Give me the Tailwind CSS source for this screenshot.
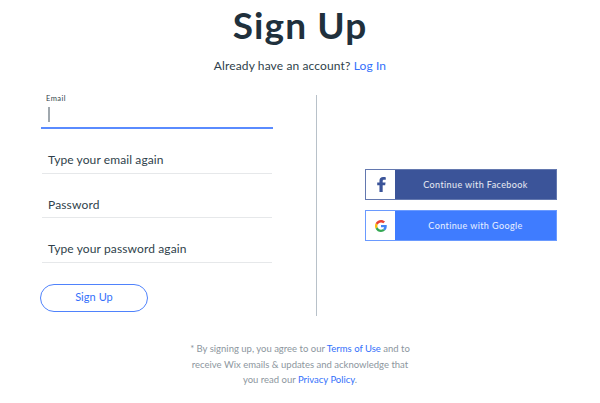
<!DOCTYPE html>
<html lang="en">
<head>
    <meta charset="UTF-8">
    <meta name="viewport" content="width=device-width, initial-scale=1.0">
    <title>Sign Up</title>
    <script src="https://cdn.jsdelivr.net/npm/@tailwindcss/browser@4"></script>
</head>
<body class="h-[403px] overflow-hidden bg-white font-['Lato',sans-serif] text-[#20303c]">

    <header class="flex flex-col items-center pt-[3px]">
        <h1 class="h-[44px] text-[37px] leading-[44px] font-bold tracking-[1.1px] whitespace-nowrap">Sign Up</h1>
        <p class="mt-[10px] text-[12px] leading-[18px] tracking-[0.12px] whitespace-nowrap text-[#2f3f4b]">Already have an account? <a href="#" class="text-[#3370fb]">Log In</a></p>
    </header>

    <main class="flex h-[221px] mt-[20px] pl-[40px]">
        <form class="w-[276px] shrink-0 text-[#2f3f4b]">
            <div class="ml-px h-[34px] w-[232px] border-b-2 border-[#5a8bff]">
                <label class="block pl-[5px] text-[7.5px] leading-[8px] tracking-[0.45px]">Email</label>
                <div class="mt-[4px] ml-[7px] h-[15px] w-[2px] bg-[#a0a8ae]"></div>
            </div>
            <div class="ml-[2px] h-[45px] w-[230px] border-b border-[#e6e8ea] pt-[22px] pl-[6px] text-[12px] leading-[18px] tracking-[0.1px]">Type your email again</div>
            <div class="ml-[2px] h-[44px] w-[230px] border-b border-[#e6e8ea] pt-[22px] pl-[6px] text-[12px] leading-[18px] tracking-[0.15px]">Password</div>
            <div class="ml-[2px] h-[45px] w-[230px] border-b border-[#e6e8ea] pt-[22px] pl-[6px] text-[12px] leading-[18px] tracking-[0.12px]">Type your password again</div>
            <button type="button" class="mt-[21px] block h-[28px] w-[108px] rounded-full border border-[#4f82fc] pb-[2px] text-[11px] leading-[24px] tracking-[0.05px] text-[#3370fb]">Sign Up</button>
        </form>

        <div class="w-px bg-[#b8c1c9]"></div>

        <div class="ml-[48px] flex w-[192px] flex-col gap-[10px] pt-[74px]">
            <button type="button" class="flex h-[31px] w-full border border-[#6378af] bg-[#3b5499] text-white">
                <span class="flex h-full w-[29px] items-center justify-center bg-white pl-[2px]">
                    <svg class="h-[15px] w-[9px]" viewBox="0 0 8 14" fill="#3b5499">
                        <path d="M2.1 14V7.800H0V5.200h2.100V3.500C2.100 1.200 3.500 0 5.500 0 6.600 0 7.600.1 8 .2v2.300H6.500c-1.100 0-1.400.5-1.400 1.300v1.400h2.700l-.4 2.600H5.100V14z"/>
                    </svg>
                </span>
                <span class="flex-1 text-center text-[9px] leading-[30px] tracking-[0.4px] text-white/90">Continue with Facebook</span>
            </button>
            <button type="button" class="flex h-[31px] w-full border border-[#6a9aff] bg-[#3f7cff] text-white">
                <span class="flex h-full w-[29px] items-center justify-center bg-white">
                    <svg class="h-[12px] w-[12px]" viewBox="0 0 48 48">
                        <path fill="#EA4335" d="M24 9.500c3.500 0 6.700 1.200 9.200 3.600l6.900-6.900C35.900 2.400 30.500 0 24 0 14.600 0 6.500 5.400 2.600 13.200l8 6.200C12.400 13.700 17.700 9.500 24 9.500z"/>
                        <path fill="#4285F4" d="M47 24.500c0-1.600-.2-3.100-.4-4.500H24v9h12.900c-.6 3-2.300 5.500-4.800 7.200l7.700 6C44.400 38 47 31.800 47 24.500z"/>
                        <path fill="#FBBC05" d="M10.500 28.600c-.5-1.500-.8-3-.8-4.600s.3-3.100.8-4.600l-7.900-6.200C.9 16.500 0 20.100 0 24s.9 7.500 2.600 10.800z"/>
                        <path fill="#34A853" d="M24 48c6.500 0 11.900-2.100 15.800-5.800l-7.700-6c-2.100 1.400-4.900 2.300-8.100 2.300-6.300 0-11.600-4.200-13.500-9.900l-7.900 6.200C6.500 42.600 14.600 48 24 48z"/>
                    </svg>
                </span>
                <span class="flex-1 text-center text-[9px] leading-[30px] tracking-[0.4px] text-white/90">Continue with Google</span>
            </button>
        </div>
    </main>

    <footer class="mt-[25px] text-center text-[9.5px] leading-[15.5px] tracking-[0px] whitespace-nowrap text-[#8c969e]">
        <p>* By signing up, you agree to our <a href="#" class="text-[#3370fb]">Terms of Use</a> and to</p>
        <p>receive Wix emails &amp; updates and acknowledge that</p>
        <p>you read our <a href="#" class="text-[#3370fb]">Privacy Policy</a>.</p>
    </footer>

</body>
</html>
